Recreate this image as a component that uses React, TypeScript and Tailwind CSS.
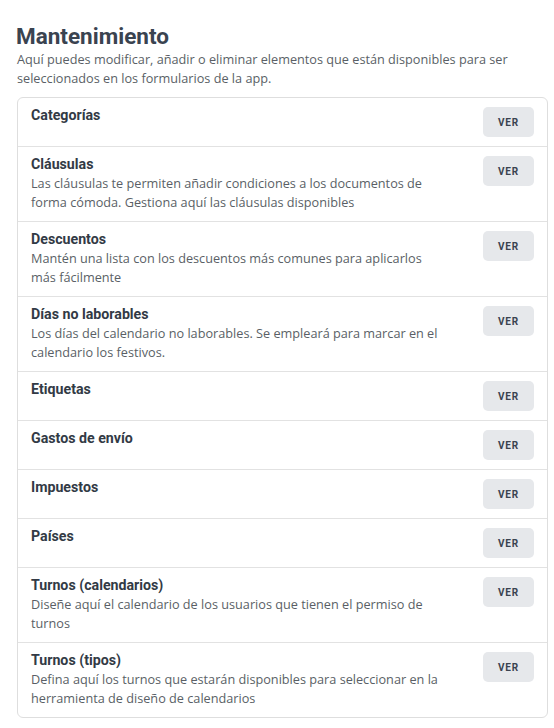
import React from "react";

const items: { title: string; lines?: string[] }[] = [
  { title: "Categorías" },
  { title: "Cláusulas", lines: ["Las cláusulas te permiten añadir condiciones a los documentos de", "forma cómoda. Gestiona aquí las cláusulas disponibles"] },
  { title: "Descuentos", lines: ["Mantén una lista con los descuentos más comunes para aplicarlos", "más fácilmente"] },
  { title: "Días no laborables", lines: ["Los días del calendario no laborables. Se empleará para marcar en el", "calendario los festivos."] },
  { title: "Etiquetas" },
  { title: "Gastos de envío" },
  { title: "Impuestos" },
  { title: "Países" },
  { title: "Turnos (calendarios)", lines: ["Diseñe aquí el calendario de los usuarios que tienen el permiso de", "turnos"] },
  { title: "Turnos (tipos)", lines: ["Defina aquí los turnos que estarán disponibles para seleccionar en la", "herramienta de diseño de calendarios"] },
];

export default function App() {
  return (
    <div className="bg-white pl-[17px] pt-[22px] pb-[10px] w-[554px]" style={{ fontFamily: '"Open Sans", sans-serif' }}>
      <h1 className="text-[22.5px] leading-[28px] font-bold text-[#3a4350] -ml-[1px]" style={{ fontFamily: 'Roboto, sans-serif' }}>Mantenimiento</h1>
      <p className="text-[12.7px] leading-[19px] text-[#5a5f66] w-[510px]">
        Aquí puedes modificar, añadir o eliminar elementos que están disponibles para ser seleccionados en los formularios de la app.
      </p>
      <div className="mt-[9px] w-[531px] border border-[#dedede] rounded-[6px] bg-white">
        {items.map((it, i) => (
          <div key={i} className={`flex items-start justify-between pl-[13px] pr-[13px] py-[9px] ${i > 0 ? "border-t border-[#e2e2e2]" : ""}`}>
            <div className="-mt-[1px]">
              <div className="text-[14.2px] leading-[19px] font-bold text-[#323a45]" style={{ fontFamily: 'Roboto, sans-serif' }}>{it.title}</div>
              {it.lines && (
                <div className="text-[12.7px] leading-[19px] text-[#5a5f66] whitespace-nowrap">
                  {it.lines.map((l, j) => (
                    <div key={j}>{l}</div>
                  ))}
                </div>
              )}
            </div>
            <button className="w-[51px] h-[30px] rounded-[5px] bg-[#e6e8eb] text-[10px] font-bold tracking-[0.08em] text-[#3a4350] shrink-0" style={{ fontFamily: 'Roboto, sans-serif' }}>VER</button>
          </div>
        ))}
      </div>
    </div>
  );
}
